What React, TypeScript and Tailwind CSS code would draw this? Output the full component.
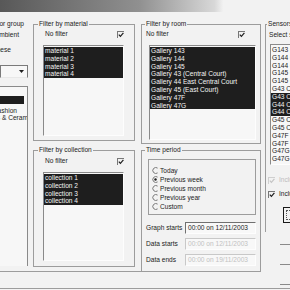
import React from "react";

const rooms = [
  "Gallery 143",
  "Gallery 144",
  "Gallery 145",
  "Gallery 43 (Central Court)",
  "Gallery 44 East Central Court",
  "Gallery 45 (East Court)",
  "Gallery 47F",
  "Gallery 47G",
];

const sensors = [
  "G143 Case 1",
  "G144 Case 1",
  "G144 Case 2",
  "G145 Case 1",
  "G145 Case 2",
  "G43 Case 1",
  "G43 Case 2",
  "G44 Case 1",
  "G44 Case 2",
  "G45 Case 1",
  "G45 Case 2",
  "G47F Case 1",
  "G47F Case 2",
  "G47G Case 1",
  "G47G Case 2",
];

function Check({ disabled = false }: { disabled?: boolean }) {
  return (
    <span
      className={`block w-[7px] h-[7px] border-l border-t ${
        disabled ? "border-[#cfcfcf]" : "border-[#777]"
      }`}
    >
      <svg viewBox="0 0 6 6" className="block w-[6px] h-[6px]">
        <path
          d="M0.8 2.6 L2.4 4.4 L5.4 0.9"
          stroke={disabled ? "#c4c4c4" : "#1e1e1e"}
          strokeWidth="1.2"
          fill="none"
        />
      </svg>
    </span>
  );
}

function Radio({ on = false }: { on?: boolean }) {
  return (
    <svg width="7" height="7" viewBox="0 0 7 7" className="block">
      <path d="M5.6 1.1 A3 3 0 1 0 5.6 5.9" stroke="#6a6a6a" strokeWidth="0.9" fill="none" />
      {on && <circle cx="3.5" cy="3.5" r="1.2" fill="#1e1e1e" />}
    </svg>
  );
}

function ListBox({
  items,
  selected,
  className,
}: {
  items: string[];
  selected: number[];
  className: string;
}) {
  return (
    <div
      className={`border-l border-t border-[#8a8a8a] border-r-[#fdfdfd] border-b-[#fdfdfd] border-r border-b bg-[#f7f7f7] pt-[1px] overflow-hidden ${className}`}
    >
      {items.map((it, i) => (
        <div
          key={i}
          className={`h-[7.8px] leading-[7.8px] pl-[1px] whitespace-nowrap ${
            selected.includes(i) ? "bg-[#1e1e1e] text-[#f4f4f4]" : ""
          }`}
        >
          {it}
        </div>
      ))}
    </div>
  );
}

function Legend({ children, ml }: { children: React.ReactNode; ml: string }) {
  return <legend className={`leading-[8px] px-[1px] ${ml}`}>{children}</legend>;
}

function DateBox({ value, disabled = false }: { value: string; disabled?: boolean }) {
  return (
    <div
      className={`w-[71px] h-[12px] leading-[10px] pl-[2px] border-l border-t border-r border-b border-r-[#fdfdfd] border-b-[#fdfdfd] bg-[#f8f8f8] whitespace-nowrap ${
        disabled ? "border-l-[#c8c8c8] border-t-[#c8c8c8] text-[#c2c2c2]" : "border-l-[#707070] border-t-[#707070]"
      }`}
    >
      {value}
    </div>
  );
}

export default function App() {
  return (
    <div className="w-[290px] h-[290px] overflow-hidden bg-[#f2f2f2] text-[6.6px] text-[#1c1c1c] font-['Liberation_Sans',Arial,sans-serif]">
      <div className="h-[12px] bg-[linear-gradient(90deg,#585858,#909090_48%,#d8d8d8_74%,#f2f2f2_77%)]" />

      <div className="flex h-[277px] border-b border-[#9c9c9c]">
        <div className="flex w-[261px] h-[260px] shrink-0 pt-[8px] border-b border-[#9c9c9c]">
          {/* left column, mostly cut off */}
          <div className="w-[28px] shrink-0 overflow-hidden">
            <div className="flex justify-end h-[8px] leading-[8px] pr-[4px] whitespace-nowrap">
              Filter by sensor group
            </div>
            <div className="flex justify-end h-[8px] leading-[8px] mt-[3px] pr-[9px] whitespace-nowrap">
              Ambient
            </div>
            <div className="flex justify-end h-[8px] leading-[8px] mt-[7px] pr-[17px] whitespace-nowrap">
              Chinese
            </div>
            <div className="flex items-center justify-end h-[13px] mt-[11px] border-t border-l border-[#7a7a7a] border-r border-b border-r-[#7a7a7a] border-b-[#e8e8e8] bg-[#f7f7f7] pr-[3px]">
              <svg width="5" height="3" viewBox="0 0 5 3">
                <path d="M0 0 H5 L2.5 3 Z" fill="#1e1e1e" />
              </svg>
            </div>
            <div className="h-[180px] mt-[8px] border-t border-r border-[#8a8a8a] bg-[#f7f7f7] pt-[1px] overflow-hidden">
              <div className="h-[7.8px]" />
              <div className="h-[7.8px] mr-[3px] bg-[#1e1e1e]" />
              <div className="h-[3px]" />
              <div className="flex justify-end h-[7.8px] leading-[7.8px] pr-[10px] whitespace-nowrap">
                Textiles &amp; Fashion
              </div>
              <div className="flex justify-end h-[7.8px] leading-[7.8px] -mr-[9px] whitespace-nowrap">
                Glass &amp; Ceramics
              </div>
            </div>
          </div>

          {/* material / collection */}
          <div className="w-[102px] shrink-0 ml-[5px] flex flex-col">
            <fieldset className="h-[121px] border border-[#9c9c9c]">
              <Legend ml="ml-[4px]">Filter by material</Legend>
              <div className="flex items-center justify-between h-[8px] mt-[2px] pl-[11px] pr-[10px]">
                <span>No filter</span>
                <Check />
              </div>
              <ListBox
                items={["material 1", "material 2", "material 3", "material 4"]}
                selected={[0, 1, 2, 3]}
                className="w-[81px] h-[91px] ml-[9px] mt-[7px]"
              />
            </fieldset>
            <fieldset className="h-[121px] mt-[5px] border border-[#9c9c9c]">
              <Legend ml="ml-[4px]">Filter by collection</Legend>
              <div className="flex items-center justify-between h-[8px] mt-[3px] pl-[11px] pr-[10px]">
                <span>No filter</span>
                <Check />
              </div>
              <ListBox
                items={["collection 1", "collection 2", "collection 3", "collection 4"]}
                selected={[0, 1, 2, 3]}
                className="w-[81px] h-[89px] ml-[9px] mt-[7px]"
              />
            </fieldset>
          </div>

          {/* room / time period */}
          <div className="w-[120px] shrink-0 ml-[6px] flex flex-col">
            <fieldset className="h-[124px] border border-[#9c9c9c]">
              <Legend ml="ml-[3px]">Filter by room</Legend>
              <div className="flex items-center justify-between h-[8px] mt-[2px] pl-[4px] pr-[15px]">
                <span>No filter</span>
                <Check />
              </div>
              <ListBox
                items={rooms}
                selected={[0, 1, 2, 3, 4, 5, 6, 7]}
                className="w-[107px] h-[95px] ml-[7px] mt-[7px]"
              />
            </fieldset>
            <fieldset className="flex-1 mt-[2px] border border-b-0 border-[#9c9c9c]">
              <Legend ml="ml-[3px]">Time period</Legend>
              <div className="w-[108px] h-[56px] ml-[6px] mt-[5px] border border-[#9c9c9c] pt-[6px] pl-[3px]">
                {["Today", "Previous week", "Previous month", "Previous year", "Custom"].map((t, i) => (
                  <div key={t} className="flex items-center gap-[1px] h-[9px]">
                    <Radio on={i === 1} />
                    <span className="leading-[9px]">{t}</span>
                  </div>
                ))}
              </div>
              <div className="flex items-center mt-[7px] pl-[4px]">
                <span className="w-[39px] whitespace-nowrap">Graph starts</span>
                <DateBox value="00:00 on 12/11/2003" />
              </div>
              <div className="flex items-center mt-[4px] pl-[4px]">
                <span className="w-[39px] whitespace-nowrap">Data starts</span>
                <DateBox value="00:00 on 12/11/2003" disabled />
              </div>
              <div className="flex items-center mt-[4px] pl-[4px]">
                <span className="w-[39px] whitespace-nowrap">Data ends</span>
                <DateBox value="00:00 on 19/11/2003" disabled />
              </div>
            </fieldset>
          </div>
        </div>

        {/* sensors, cut at the right edge */}
        <div className="ml-[4px] pt-[8px] w-[60px] shrink-0">
          <fieldset className="h-[212px] border-l border-t border-[#9c9c9c]">
            <Legend ml="ml-[1px]">Sensors to plot</Legend>
            <div className="h-[8px] leading-[8px] mt-[3px] pl-[3px] whitespace-nowrap">Select sensors</div>
            <ListBox items={sensors} selected={[6, 7, 8]} className="w-[50px] h-[121px] ml-[4px] mt-[5px]" />
            <div className="flex items-center gap-[4px] h-[8px] mt-[11px] pl-[2px] text-[#bdbdbd] whitespace-nowrap">
              <Check disabled />
              <span>Include all cases</span>
            </div>
            <div className="flex items-center gap-[4px] h-[8px] mt-[6px] pl-[2px] whitespace-nowrap">
              <Check />
              <span>Include all sensors</span>
            </div>
            <div className="w-[30px] h-[16px] ml-[17px] mt-[9px] border border-[#1a1a1a] bg-[#f2f2f2] p-[2px]">
              <div className="h-full border border-dotted border-[#555]" />
            </div>
          </fieldset>
          <div className="ml-[15px] mt-[12px] h-px bg-[#8a8a8a]" />
          <div className="ml-[15px] mt-[19px] h-px bg-[#8a8a8a]" />
          <div className="ml-[15px] mt-[19px] h-px bg-[#8a8a8a]" />
        </div>
      </div>
    </div>
  );
}
